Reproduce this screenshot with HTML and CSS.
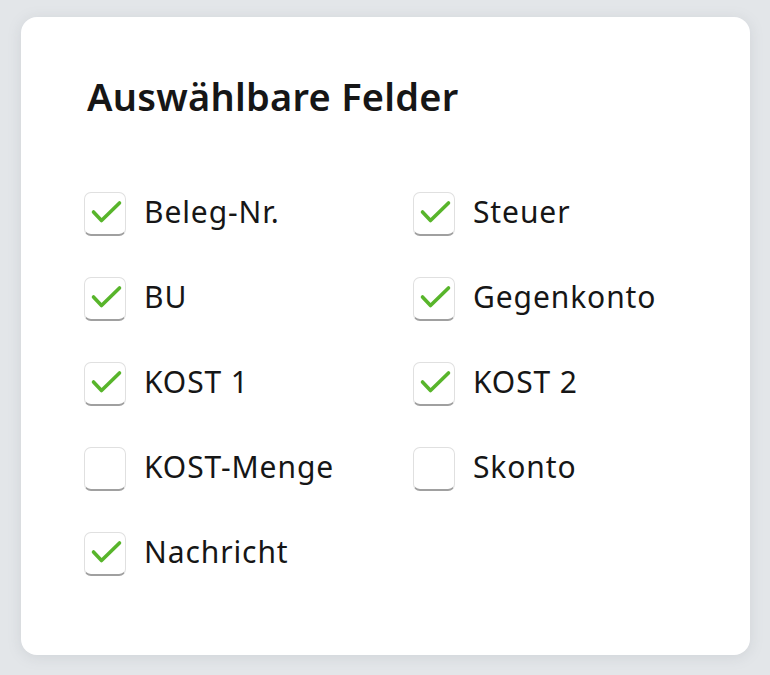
FILE: index.html
```html
<!DOCTYPE html>
<html lang="de">
<head>
<meta charset="utf-8">
<link rel="stylesheet" href="styles.css">
</head>
<body>
<div class="card">
  <h1 class="title">Auswählbare Felder</h1>
  <div class="grid">
    <label class="item"><span class="box on"><svg viewBox="0 0 42 42"><path d="M9.5 20 L17.5 28.5 L35.5 11"/></svg></span><span class="txt">Beleg-Nr.</span></label>
    <label class="item"><span class="box on"><svg viewBox="0 0 42 42"><path d="M9.5 20 L17.5 28.5 L35.5 11"/></svg></span><span class="txt">Steuer</span></label>
    <label class="item"><span class="box on"><svg viewBox="0 0 42 42"><path d="M9.5 20 L17.5 28.5 L35.5 11"/></svg></span><span class="txt">BU</span></label>
    <label class="item"><span class="box on"><svg viewBox="0 0 42 42"><path d="M9.5 20 L17.5 28.5 L35.5 11"/></svg></span><span class="txt">Gegenkonto</span></label>
    <label class="item"><span class="box on"><svg viewBox="0 0 42 42"><path d="M9.5 20 L17.5 28.5 L35.5 11"/></svg></span><span class="txt">KOST 1</span></label>
    <label class="item"><span class="box on"><svg viewBox="0 0 42 42"><path d="M9.5 20 L17.5 28.5 L35.5 11"/></svg></span><span class="txt">KOST 2</span></label>
    <label class="item"><span class="box"></span><span class="txt">KOST-Menge</span></label>
    <label class="item"><span class="box"></span><span class="txt">Skonto</span></label>
    <label class="item"><span class="box on"><svg viewBox="0 0 42 42"><path d="M9.5 20 L17.5 28.5 L35.5 11"/></svg></span><span class="txt">Nachricht</span></label>
  </div>
</div>
</body>
</html>
```
FILE: styles.css
```css
html, body {
  margin: 0;
  padding: 0;
}
body {
  background: #e3e6e9;
  width: 770px;
  height: 675px;
  padding: 17px 20px 0 21px;
  box-sizing: border-box;
  font-family: "Noto Sans", "Open Sans", sans-serif;
  color: #161616;
}
.card {
  width: 729px;
  height: 638px;
  box-sizing: border-box;
  background: #fff;
  border-radius: 16px;
  box-shadow: 0 2px 14px rgba(120, 130, 140, 0.18);
  padding: 54px 63px 0 63px;
}
.title {
  margin: 0 0 0 3px;
  font-size: 38px;
  font-weight: 600;
  line-height: 50px;
  letter-spacing: 0.25px;
}
.grid {
  display: grid;
  grid-template-columns: 329px 1fr;
  grid-auto-rows: 85px;
  margin-top: 71px;
}
.item {
  display: flex;
  align-items: flex-start;
  gap: 18px;
}
.box {
  position: relative;
  width: 42px;
  height: 44px;
  box-sizing: border-box;
  border: 1px solid #e0e0e0;
  border-bottom: 2px solid #a0a0a0;
  border-radius: 7px;
  background: #fff;
  flex: none;
}
.box svg {
  position: absolute;
  left: -1px;
  top: -1px;
  width: 42px;
  height: 42px;
  fill: none;
  stroke: #58b52b;
  stroke-width: 3.6;
  stroke-linecap: round;
  stroke-linejoin: round;
}
.txt {
  font-size: 30px;
  line-height: 40px;
  font-weight: 400;
  letter-spacing: 0.9px;
}
```
